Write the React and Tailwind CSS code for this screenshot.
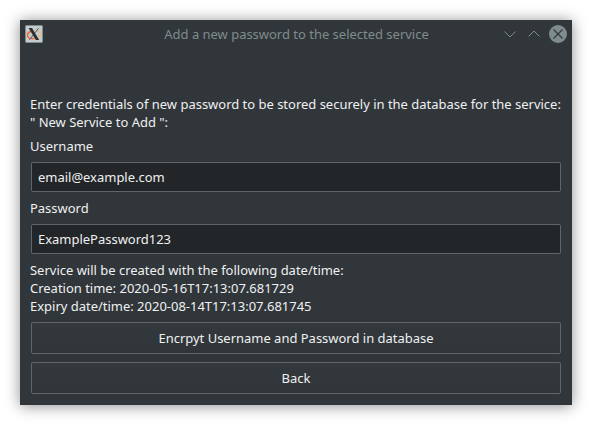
function TitleBar() {
  return (
    <header className="flex h-7 items-center pl-[5px] pr-[5px] text-[#7f8c8d]">
      <svg className="h-[18px] w-[18px] shrink-0" viewBox="0 0 18 18">
        <rect x="0.5" y="0.5" width="17" height="17" rx="1" fill="#c3cbcd" stroke="#7f8c8d" />
        <path d="M6 6.2C3.5 7 2.2 8.8 2.6 10.8C3 13 6 14 9 13.6" fill="none" stroke="#f4652f" strokeWidth="1.5" />
        <path d="M11.5 6C14 6.2 15.8 7.8 15.4 10C15 12 12.5 13.3 9 13.6" fill="none" stroke="#f0b878" strokeWidth="1.3" />
        <path d="M13.6 3.2L4.4 14.8" stroke="#4d5457" strokeWidth="1" />
        <path d="M3.6 3H7L14.2 15H10.8Z" fill="#2b3032" />
      </svg>
      <h1 className="flex-1 pl-[49px] text-center">Add a new password to the selected service</h1>
      <div className="flex items-center gap-[6px]">
        <svg className="h-[18px] w-[18px]" viewBox="0 0 18 18" fill="none" stroke="currentColor">
          <path d="M3.5 6.5L9 12L14.5 6.5" />
        </svg>
        <svg className="h-[18px] w-[18px]" viewBox="0 0 18 18" fill="none" stroke="currentColor">
          <path d="M3.5 11.5L9 6L14.5 11.5" />
        </svg>
        <svg className="h-[18px] w-[18px]" viewBox="0 0 18 18" fill="none">
          <circle cx="9" cy="9" r="9" fill="#7f8c8d" />
          <path d="M4.5 4.5L13.5 13.5M13.5 4.5L4.5 13.5" stroke="#31363b" strokeWidth="1.1" />
        </svg>
      </div>
    </header>
  );
}

function Field({ label, value }) {
  return (
    <label className="mt-[6px] block pb-px">
      <span className="block">{label}</span>
      <input
        type="text"
        defaultValue={value}
        className="mx-px mt-[7px] block h-[30px] w-[530px] rounded-[2px] border border-[#616569] bg-[#232629] px-[6px] outline-none"
      />
    </label>
  );
}

function Button({ children }) {
  return (
    <button
      type="button"
      className="mx-px block h-8 w-[530px] rounded-[2px] border border-[#616569] bg-linear-to-b from-[#33383c] to-[#303539]"
    >
      {children}
    </button>
  );
}

export default function App() {
  return (
    <div className="h-[425px] w-[592px] overflow-hidden bg-white p-5 font-['Noto_Sans',sans-serif] text-[12.98px] leading-[18px]">
      <section className="h-[385px] w-[552px] bg-[#31363a] text-[#eff0f1] shadow-[0_1px_14px_rgba(0,0,0,0.45)]">
        <TitleBar />
        <main className="px-[10px] pt-[47px]">
          <p className="whitespace-nowrap">
            Enter credentials of new password to be stored securely in the database for the service:
            <br />" New Service to Add ":
          </p>
          <Field label="Username" value="email@example.com" />
          <Field label="Password" value="ExamplePassword123" />
          <p className="mt-[6px]">
            Service will be created with the following date/time:
            <br />
            Creation time: 2020-05-16T17:13:07.681729
            <br />
            Expiry date/time: 2020-08-14T17:13:07.681745
          </p>
          <div className="mt-[7px] flex flex-col gap-2">
            <Button>Encrpyt Username and Password in database</Button>
            <Button>Back</Button>
          </div>
        </main>
      </section>
    </div>
  );
}
